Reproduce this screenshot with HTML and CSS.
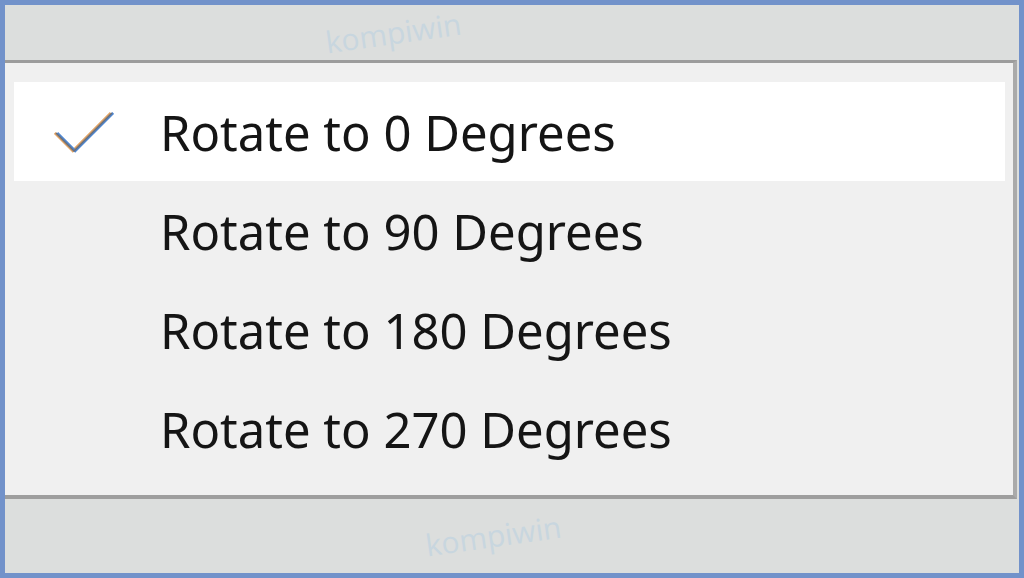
FILE: index.html
```html
<!DOCTYPE html>
<html>
<head>
<meta charset="utf-8">
<link rel="stylesheet" href="styles.css">
</head>
<body>
<div class="frame">
  <div class="band top-band">
    <span class="wm wm1">kompiwin</span>
  </div>
  <div class="menu">
    <div class="item active">
      <span class="check">
        <svg width="60" height="46" viewBox="0 0 60 46">
          <polyline points="2,24 20,42 58,4" fill="none" stroke="#e0a060" stroke-width="2.6" transform="translate(-1.2,0)"/>
          <polyline points="2,24 20,42 58,4" fill="none" stroke="#4f86d0" stroke-width="2.6" transform="translate(1.2,0)"/>
          <polyline points="2,24 20,42 58,4" fill="none" stroke="#6a6f78" stroke-width="1.4"/>
        </svg>
      </span>
      <span class="label">Rotate to 0 Degrees</span>
    </div>
    <div class="item"><span class="check"></span><span class="label">Rotate to 90 Degrees</span></div>
    <div class="item"><span class="check"></span><span class="label">Rotate to 180 Degrees</span></div>
    <div class="item"><span class="check"></span><span class="label">Rotate to 270 Degrees</span></div>
  </div>
  <div class="band bottom-band">
    <span class="wm wm2">kompiwin</span>
  </div>
</div>
</body>
</html>
```

FILE: styles.css
```css
html, body {
  margin: 0;
  padding: 0;
}
body {
  width: 1024px;
  height: 578px;
  overflow: hidden;
  font-family: "Noto Sans", "Open Sans", sans-serif;
}
.frame {
  box-sizing: border-box;
  width: 1024px;
  height: 578px;
  border: 5px solid #7292ca;
  background: #dcdedd;
  padding: 0 2px 0 0;
  display: flex;
  flex-direction: column;
  overflow: hidden;
}
.band {
  flex: none;
  display: flex;
  align-items: center;
}
.top-band {
  height: 55px;
  padding-left: 320px;
}
.bottom-band {
  flex: 1;
  padding-left: 420px;
}
.menu {
  flex: none;
  height: 439px;
  box-sizing: border-box;
  background: #f0f0f0;
  border-top: 3px solid #9c9c9c;
  border-right: 4px solid #aaaaaa;
  border-bottom: 4px solid #9e9e9e;
  padding: 19px 8px 17px 9px;
}
.item {
  height: 99px;
  display: flex;
  align-items: center;
  color: #151515;
  font-size: 49px;
}
.item.active {
  background: #ffffff;
}
.check {
  width: 146px;
  flex: none;
  display: flex;
  align-items: center;
  padding-left: 40px;
  box-sizing: border-box;
}
.wm {
  font-family: "Open Sans", sans-serif;
  font-size: 30px;
  line-height: 1;
  color: #c8d6df;
  transform: rotate(-8deg);
  white-space: nowrap;
}
```
